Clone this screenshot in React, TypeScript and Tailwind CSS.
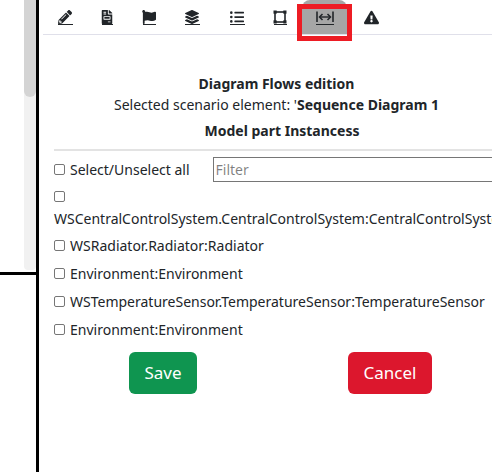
import { FaPencilAlt, FaFileInvoice, FaFlag, FaLayerGroup, FaListUl, FaExclamationTriangle } from 'react-icons/fa';
import type { ReactNode } from 'react';

const font = { fontFamily: '"Noto Sans", sans-serif' };

function Icon({ children, line }: { children: ReactNode; line: string }) {
    return (
        <div className="flex flex-col items-center text-[#212529]">
            {children}
            <div className={`h-px bg-[#212529] ${line}`} />
        </div>
    );
}

function Row({ label }: { label: string }) {
    return (
        <label className="flex items-center h-[28px] text-[14px] text-[#212529] whitespace-nowrap">
            <span className="w-[11px] h-[11px] rounded-[2px] border border-[#767676] bg-white mr-[5px] shrink-0" />
            {label}
        </label>
    );
}

export default function App() {
    return (
        <div className="w-[492px] h-[472px] overflow-hidden bg-white flex" style={font}>
            <div className="w-[36px] shrink-0 flex flex-col">
                <div className="h-[275px] flex justify-end border-b-[3px] border-black pb-[2px]">
                    <div className="w-[12px] bg-[#f1f1f1] rounded-b-[4px]">
                        <div className="h-[97px] bg-[#d4d4d4] rounded-b-[6px]" />
                    </div>
                </div>
            </div>
            <div className="w-[3px] bg-black shrink-0" />
            <div className="flex-1 min-w-0 pl-[4px]">
                <div className="flex h-[35px] border-b border-[#e0e0ea] pl-px">
                    <div className="w-[42px] flex justify-center pt-[10px]"><Icon line="w-[15px]"><FaPencilAlt size={14} /></Icon></div>
                    <div className="w-[42px] flex justify-center pt-[10px]"><Icon line="w-[11px]"><FaFileInvoice size={14} /></Icon></div>
                    <div className="w-[42px] flex justify-center pt-[10px]"><Icon line="w-[13px]"><FaFlag size={14} /></Icon></div>
                    <div className="w-[44px] flex justify-center pt-[10px]"><Icon line="w-[15px]"><FaLayerGroup size={14} /></Icon></div>
                    <div className="w-[46px] flex justify-center pt-[10px]"><Icon line="w-[15px]"><FaListUl size={14} /></Icon></div>
                    <div className="w-[40px] flex justify-center pt-[10px]">
                        <Icon line="w-[13px]">
                            <svg width="14" height="14" viewBox="0 0 14 14" fill="none">
                                <rect x="2" y="2" width="10" height="10" stroke="currentColor" strokeWidth="1.6" />
                                <rect x="0.5" y="0.5" width="3.2" height="3.2" fill="currentColor" />
                                <rect x="10.3" y="0.5" width="3.2" height="3.2" fill="currentColor" />
                                <rect x="0.5" y="10.3" width="3.2" height="3.2" fill="currentColor" />
                                <rect x="10.3" y="10.3" width="3.2" height="3.2" fill="currentColor" />
                            </svg>
                        </Icon>
                    </div>
                    <div className="relative w-[50px] flex justify-center pt-[10px]">
                        <div className="absolute left-[2px] top-0 w-[45px] h-[34px] bg-[#a6a6a6] rounded-t-[8px]" />
                        <div className="relative">
                            <Icon line="w-[18px]">
                                <svg width="18" height="14" viewBox="0 0 18 14" fill="none" stroke="currentColor">
                                    <path d="M1 1.5v10.5M17 1.5v10.5" strokeWidth="1.6" />
                                    <path d="M4 7h10" strokeWidth="1.4" />
                                    <path d="M6.5 4 3.5 7l3 3M11.5 4l3 3-3 3" strokeWidth="1.5" />
                                </svg>
                            </Icon>
                        </div>
                        <div className="absolute left-[-3px] top-[4px] w-[55px] h-[37px] border-[5px] border-[#ed1c24]" />
                    </div>
                    <div className="w-[42px] flex justify-center pt-[10px]"><Icon line="w-0"><FaExclamationTriangle size={15} /></Icon></div>
                </div>
                <div className="pl-[11px] mt-[38px]">
                    <div className="text-center w-[445px] text-[14px] text-[#212529] leading-[21px]">
                        <div className="font-bold">Diagram Flows edition</div>
                        <div>Selected scenario element: '<b>Sequence Diagram 1</b></div>
                        <div className="font-bold mt-[5px] pl-[11px]">Model part Instancess</div>
                    </div>
                    <div className="h-[2px] bg-[#e3e3e3] mt-[8px] mb-[4px]" />
                    <div className="flex items-center h-[28px]">
                        <Row label="Select/Unselect all" />
                        <input placeholder="Filter" className="ml-[23px] w-[290px] h-[25px] border border-[#767676] px-[2px] pt-px text-[14px] shrink-0" />
                    </div>
                    <div className="text-[14px] text-[#212529] whitespace-nowrap leading-[21px] pt-[4px] pb-[2px]">
                        <span className="block w-[11px] h-[11px] rounded-[2px] border border-[#767676] mt-[4px] mb-[6px]" />
                        WSCentralControlSystem.CentralControlSystem:CentralControlSystem
                    </div>
                    <Row label="WSRadiator.Radiator:Radiator" />
                    <Row label="Environment:Environment" />
                    <Row label="WSTemperatureSensor.TemperatureSensor:TemperatureSensor" />
                    <Row label="Environment:Environment" />
                    <div className="flex mt-[9px] pl-[75px]">
                        <button className="w-[68px] h-[42px] rounded-[6px] bg-[#0f9550] text-white text-[17px]">Save</button>
                        <button className="w-[84px] h-[42px] rounded-[6px] bg-[#dc172d] text-white text-[17px] ml-[151px]">Cancel</button>
                    </div>
                </div>
            </div>
        </div>
    );
}
